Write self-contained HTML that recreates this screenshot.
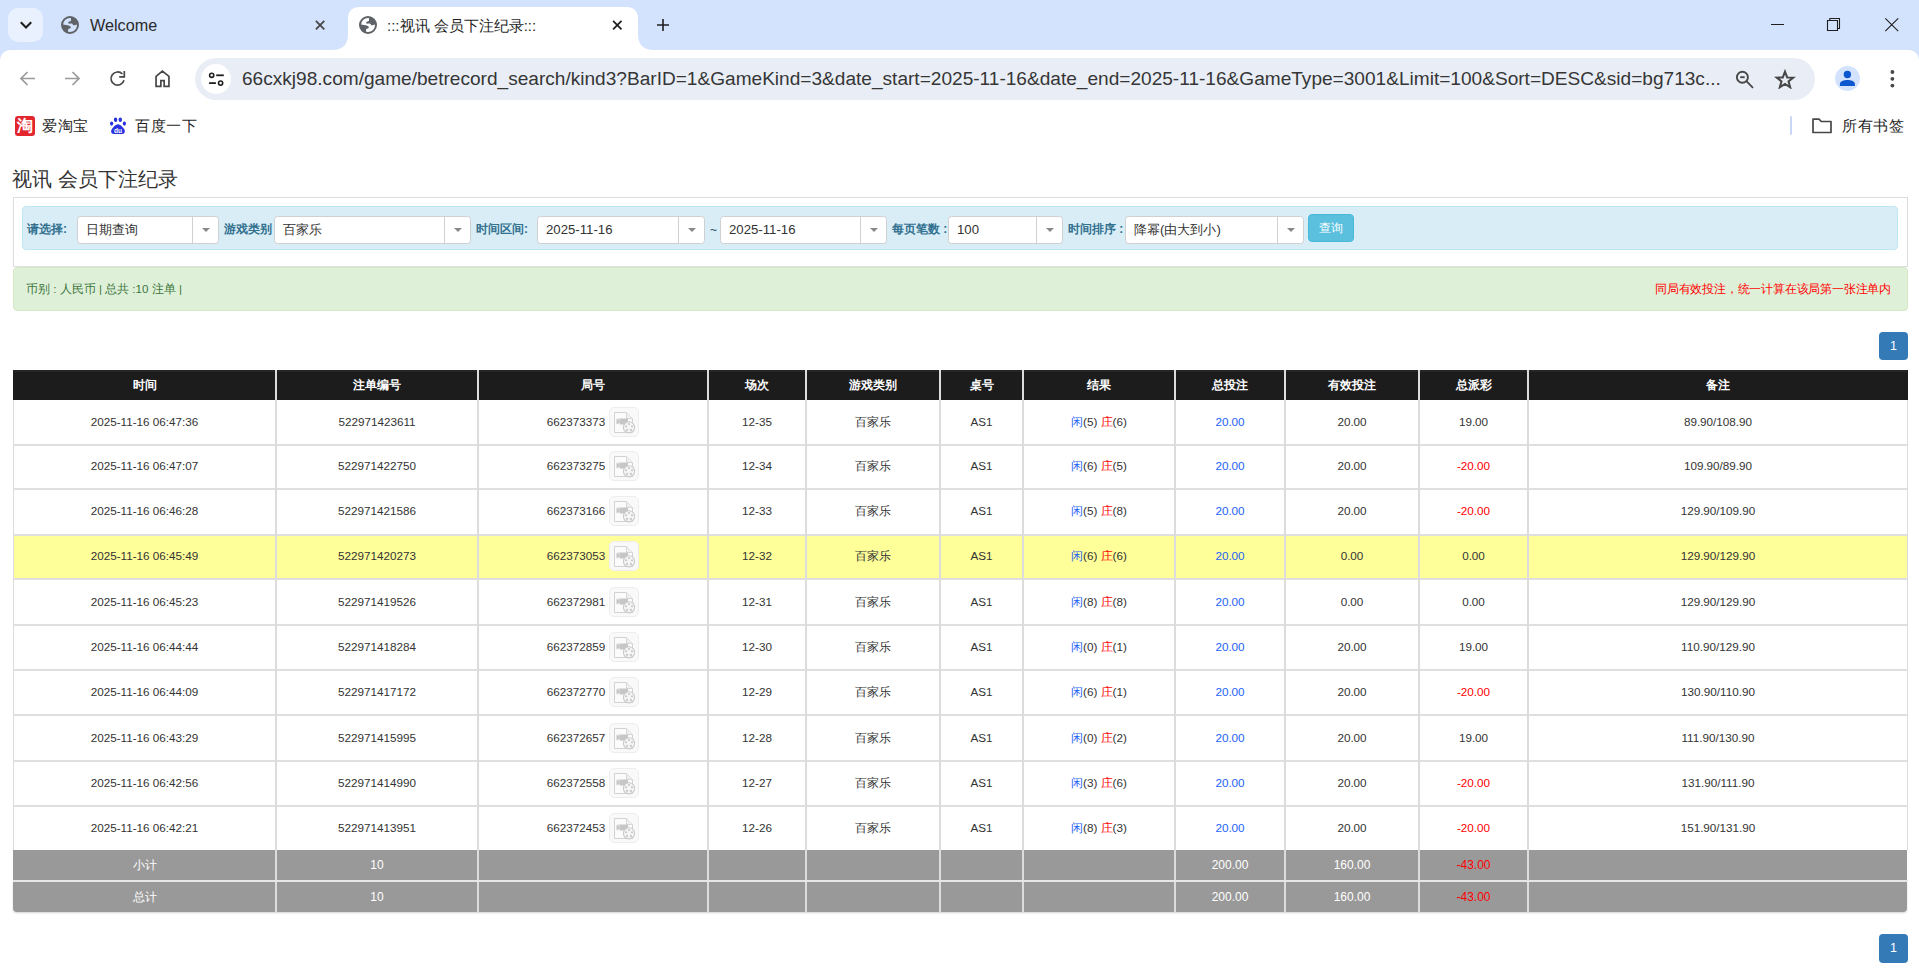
<!DOCTYPE html>
<html><head><meta charset="utf-8">
<style>
*{box-sizing:border-box;margin:0;padding:0}
html,body{width:1919px;height:970px;overflow:hidden;background:#fff;font-family:"Liberation Sans",sans-serif;}
.a{position:absolute}
#tabs{left:0;top:0;width:1919px;height:62px;background:#d3e3fd}
.ui{color:#1f1f1f}
.t{position:absolute;white-space:nowrap}
.sel{position:absolute;top:216px;height:28px;background:#fff;border:1px solid #d0d0d0;border-radius:3.5px}
.sel .dv{position:absolute;top:0;bottom:0;width:1px;background:#d0d0d0}
.sel .ar{position:absolute;top:11px;width:0;height:0;border-left:4px solid transparent;border-right:4px solid transparent;border-top:4px solid #888}
.sel .tx{position:absolute;left:8px;top:5px;font-size:13.2px;line-height:16px;color:#333;white-space:nowrap}
.lb{position:absolute;top:221px;font-size:12px;line-height:16px;font-weight:bold;color:#31708f;white-space:nowrap}
.th{position:absolute;top:370px;height:30px;line-height:30px;text-align:center;color:#fff;font-weight:bold;font-size:12px;white-space:nowrap}
.td{position:absolute;height:44px;line-height:44px;text-align:center;color:#333;font-size:11.7px;white-space:nowrap}
.tf{position:absolute;height:30px;line-height:30px;text-align:center;color:#fff;font-size:12px;white-space:nowrap}
.bl{color:#1d62f6}.rd{color:#f00}
.ic{position:absolute;top:7px;left:130px}
.ju{position:relative;left:-17px}
.hl{left:13px;width:1895px;height:2px;background:#dfdfdf}
</style></head><body>
<!-- TAB STRIP -->
<div id="tabs" class="a"></div>
<div class="a" style="left:8px;top:8px;width:35px;height:34px;border-radius:10px;background:#e9f1fe"></div>
<svg class="a" style="left:17px;top:17px" width="18" height="16" viewBox="0 0 18 16"><path d="M3.8 5.2 L9 10.4 L14.2 5.2" fill="none" stroke="#1f1f1f" stroke-width="2.1"/></svg>
<svg class="a" style="left:61px;top:16px" width="18" height="18" viewBox="0 0 18 18"><circle cx="9" cy="9" r="8" fill="none" stroke="#5f6368" stroke-width="2"/><path d="M10 1L10 4.5C10 5 9.5 5.2 8.5 5.5C7.3 5.8 7 6.5 7.3 7.2C7.6 7.8 8.5 7.6 9.8 7.6C11 7.6 11.5 8 12 8.8C12.5 9.5 13.5 9.5 14.5 9L17 8L17 6C16 3 13.5 1.2 10 1Z" fill="#5f6368"/><path d="M1 8.5L1.5 12C2.5 14.5 4.5 16.3 7 17L7 14C7 13.2 7.6 12.8 8.6 12.5C9.6 12.2 10 11.6 9.7 10.9C9.3 10 8.3 9.6 6.5 9.2C4.5 8.8 2.5 8.5 1 8.5Z" fill="#5f6368"/></svg>
<div class="a ui" style="left:90px;top:15px;font-size:16.2px;line-height:20px;color:#2a2a2a">Welcome</div>
<svg class="a" style="left:314px;top:19px" width="12" height="12" viewBox="0 0 12 12"><path d="M1.9 1.9L10.3 10.3M10.3 1.9L1.9 10.3" stroke="#474747" stroke-width="1.8"/></svg>
<svg class="a" style="left:332px;top:7px" width="322" height="43" viewBox="0 0 322 43"><path d="M0 43 Q16 43 16 27 V12 Q16 0 28 0 H294 Q306 0 306 12 V27 Q306 43 322 43 Z" fill="#fff"/></svg>
<svg class="a" style="left:359px;top:16px" width="18" height="18" viewBox="0 0 18 18"><circle cx="9" cy="9" r="8" fill="none" stroke="#5f6368" stroke-width="2"/><path d="M10 1L10 4.5C10 5 9.5 5.2 8.5 5.5C7.3 5.8 7 6.5 7.3 7.2C7.6 7.8 8.5 7.6 9.8 7.6C11 7.6 11.5 8 12 8.8C12.5 9.5 13.5 9.5 14.5 9L17 8L17 6C16 3 13.5 1.2 10 1Z" fill="#5f6368"/><path d="M1 8.5L1.5 12C2.5 14.5 4.5 16.3 7 17L7 14C7 13.2 7.6 12.8 8.6 12.5C9.6 12.2 10 11.6 9.7 10.9C9.3 10 8.3 9.6 6.5 9.2C4.5 8.8 2.5 8.5 1 8.5Z" fill="#5f6368"/></svg>
<div class="a ui" style="left:387px;top:16px;font-size:15px;line-height:20px;color:#1f1f1f">:::视讯 会员下注纪录:::</div>
<svg class="a" style="left:611px;top:19px" width="12" height="12" viewBox="0 0 12 12"><path d="M2.1 1.9L10.5 10.3M10.5 1.9L2.1 10.3" stroke="#1f1f1f" stroke-width="1.8"/></svg>
<svg class="a" style="left:656px;top:18px" width="14" height="14" viewBox="0 0 14 14"><path d="M7 1V13M1 7H13" stroke="#1f1f1f" stroke-width="1.6"/></svg>
<svg class="a" style="left:1770px;top:18px" width="16" height="14" viewBox="0 0 16 14"><path d="M1 6.5H14" stroke="#1f1f1f" stroke-width="1"/></svg>
<svg class="a" style="left:1826px;top:17px" width="16" height="16" viewBox="0 0 16 16"><path d="M1.5 3.5H11.5V13.5H1.5Z M3.8 3.5V1.5H13.5V11.5H11.5" fill="none" stroke="#1f1f1f" stroke-width="1.1"/></svg>
<svg class="a" style="left:1884px;top:17px" width="16" height="16" viewBox="0 0 16 16"><path d="M1.3 1.3L14.2 14.2M14.2 1.3L1.3 14.2" stroke="#1f1f1f" stroke-width="1.1"/></svg>
<!-- TOOLBAR -->
<div class="a" style="left:0;top:50px;width:1919px;height:96px;background:#fff;border-radius:10px 10px 0 0"></div>
<svg class="a" style="left:19px;top:70px" width="17" height="17" viewBox="0 0 17 17"><path d="M16 8.5H2.2M8.5 2 L2 8.5 L8.5 15" fill="none" stroke="#9a9a9a" stroke-width="1.7"/></svg>
<svg class="a" style="left:64px;top:70px" width="17" height="17" viewBox="0 0 17 17"><path d="M1 8.5H14.8M8.5 2 L15 8.5 L8.5 15" fill="none" stroke="#9a9a9a" stroke-width="1.7"/></svg>
<svg class="a" style="left:109px;top:70px" width="17" height="17" viewBox="0 0 17 17"><path d="M15 10.3A6.6 6.6 0 1 1 13.4 4" fill="none" stroke="#474747" stroke-width="1.7"/><path d="M15.3 1V6.8H10.2" fill="none" stroke="#474747" stroke-width="1.7" stroke-linejoin="miter"/></svg>
<svg class="a" style="left:153px;top:69px" width="18" height="19" viewBox="0 0 18 19"><path d="M3.05 17.45V7.4L9.4 2.2L15.95 7.4V17.45H11.15V11.65H7.85V17.45Z" fill="none" stroke="#474747" stroke-width="1.7" stroke-linejoin="miter"/></svg>
<div class="a" style="left:195px;top:58px;width:1620px;height:42px;border-radius:21px;background:#e9eef6"></div>
<div class="a" style="left:201px;top:64px;width:30px;height:30px;border-radius:15px;background:#fff"></div>
<svg class="a" style="left:208px;top:71px" width="17" height="17" viewBox="0 0 17 17"><circle cx="3.7" cy="4.3" r="2.1" fill="none" stroke="#1f1f1f" stroke-width="1.6"/><path d="M8.2 4.3H15.8" stroke="#1f1f1f" stroke-width="1.8"/><circle cx="12.6" cy="12.1" r="2.1" fill="none" stroke="#1f1f1f" stroke-width="1.6"/><path d="M1.1 12.1H7.9" stroke="#1f1f1f" stroke-width="1.8"/></svg>
<div class="a ui" id="url" style="left:242px;top:68px;font-size:19.08px;line-height:22px;color:#363636;white-space:nowrap">66cxkj98.com/game/betrecord_search/kind3?BarID=1&amp;GameKind=3&amp;date_start=2025-11-16&amp;date_end=2025-11-16&amp;GameType=3001&amp;Limit=100&amp;Sort=DESC&amp;sid=bg713c...</div>
<svg class="a" style="left:1735px;top:69px" width="20" height="20" viewBox="0 0 20 20"><circle cx="7.4" cy="8.2" r="5.5" fill="none" stroke="#474747" stroke-width="1.9"/><path d="M5.2 8.2H9.7" stroke="#474747" stroke-width="1.9"/><path d="M11.4 12.2L18 18.8" stroke="#474747" stroke-width="1.8"/></svg>
<svg class="a" style="left:1774px;top:69px" width="22" height="20" viewBox="0 0 22 20"><path d="M11 2.6L13.2 8.4L19.3 8.6L14.5 12.4L16.2 18.3L11 14.9L5.8 18.3L7.5 12.4L2.7 8.6L8.8 8.4Z" fill="none" stroke="#474747" stroke-width="2" stroke-linejoin="miter"/></svg>
<div class="a" style="left:1835px;top:66px;width:25px;height:25px;border-radius:13px;background:#d3e3fd"></div>
<svg class="a" style="left:1838px;top:69px" width="19" height="19" viewBox="0 0 19 19"><circle cx="9.4" cy="5.5" r="3.7" fill="#0b57d0"/><path d="M1.9 17V14.8C1.9 12.4 5.8 10.9 9.4 10.9S16.9 12.4 16.9 14.8V17Z" fill="#0b57d0"/></svg>
<svg class="a" style="left:1888px;top:69px" width="8" height="20" viewBox="0 0 8 20"><circle cx="4.4" cy="3" r="1.9" fill="#474747"/><circle cx="4.4" cy="9.8" r="1.9" fill="#474747"/><circle cx="4.4" cy="16.6" r="1.9" fill="#474747"/></svg>
<!-- BOOKMARKS -->
<div class="a" style="left:15px;top:116px;width:20px;height:20px;border-radius:3px;background:#e3262d"></div>
<div class="a" style="left:15px;top:116px;width:20px;height:20px;font-size:16px;line-height:20px;text-align:center;color:#fff;font-weight:bold">淘</div>
<div class="a ui" style="left:42px;top:116px;font-size:15px;letter-spacing:0.7px;line-height:20px;color:#1f1f1f">爱淘宝</div>
<svg class="a" style="left:109px;top:116px" width="18" height="19" viewBox="0 0 18 19"><ellipse cx="6.6" cy="3.8" rx="1.7" ry="2.3" fill="#2932e1"/><ellipse cx="11.3" cy="3.8" rx="1.7" ry="2.3" fill="#2932e1"/><ellipse cx="2.6" cy="7.6" rx="1.6" ry="2.1" fill="#2932e1"/><ellipse cx="15.4" cy="7.6" rx="1.6" ry="2.1" fill="#2932e1"/><path d="M9 8.3C6.6 8.3 4.6 11 3 13C1.4 14.8 2.2 18 4.6 18H13.4C15.8 18 16.6 14.8 15 13C13.4 11 11.4 8.3 9 8.3Z" fill="#2932e1"/><text x="9" y="16.6" font-size="6.6" font-family="Liberation Sans" font-weight="bold" fill="#fff" text-anchor="middle">du</text></svg>
<div class="a ui" style="left:135px;top:116px;font-size:15px;letter-spacing:0.7px;line-height:20px;color:#1f1f1f">百度一下</div>
<div class="a" style="left:1790px;top:116px;width:2px;height:19px;background:#c9d7f6;border-radius:1px"></div>
<svg class="a" style="left:1811px;top:117px" width="22" height="17" viewBox="0 0 22 17"><path d="M2 2.2H8.2L10.2 4.5H20V15.5H2Z" fill="none" stroke="#474747" stroke-width="1.7" stroke-linejoin="round"/></svg>
<div class="a ui" style="left:1842px;top:116px;font-size:15px;letter-spacing:0.7px;line-height:20px;color:#1f1f1f">所有书签</div>
<!-- PAGE -->
<div class="t" style="left:12px;top:166px;font-size:20px;line-height:26px;color:#333">视讯 会员下注纪录</div>
<div class="a" style="left:13px;top:197px;width:1895px;height:70px;border:1px solid #ddd;border-bottom:none"></div>
<div class="a" style="left:13px;top:266px;width:1895px;height:1px;background:#ddd"></div>
<div class="a" style="left:22px;top:206px;width:1876px;height:44px;background:#d9edf7;border:1px solid #bce8f1;border-radius:4px"></div>
<div class="lb" style="left:27px">请选择:</div>
<div class="sel" style="left:77px;width:142px"><div class="tx">日期查询</div><div class="dv" style="left:114px"></div><div class="ar" style="left:124px"></div></div>
<div class="lb" style="left:224px">游戏类别</div>
<div class="sel" style="left:274px;width:197px"><div class="tx">百家乐</div><div class="dv" style="left:169px"></div><div class="ar" style="left:179px"></div></div>
<div class="lb" style="left:476px">时间区间:</div>
<div class="sel" style="left:537px;width:168px"><div class="tx">2025-11-16</div><div class="dv" style="left:140px"></div><div class="ar" style="left:150px"></div></div>
<div class="t" style="left:710px;top:222px;font-size:12px;line-height:16px;color:#2a4a5e">~</div>
<div class="sel" style="left:720px;width:167px"><div class="tx">2025-11-16</div><div class="dv" style="left:139px"></div><div class="ar" style="left:149px"></div></div>
<div class="lb" style="left:892px">每页笔数 :</div>
<div class="sel" style="left:948px;width:115px"><div class="tx">100</div><div class="dv" style="left:87px"></div><div class="ar" style="left:97px"></div></div>
<div class="lb" style="left:1068px">时间排序 :</div>
<div class="sel" style="left:1125px;width:179px"><div class="tx">降幂(由大到小)</div><div class="dv" style="left:151px"></div><div class="ar" style="left:161px"></div></div>
<div class="a" style="left:1308px;top:214px;width:46px;height:28px;background:#5bc0de;border:1px solid #46b8da;border-radius:4px;color:#fff;font-size:12px;line-height:26px;text-align:center">查询</div>
<div class="a" style="left:13px;top:267px;width:1895px;height:44px;background:#dff0d8;border:1px solid #d6e9c6;border-radius:4px"></div>
<div class="t" style="left:26px;top:281px;font-size:11.6px;line-height:16px;color:#3c763d">币别 : 人民币 | 总共 :10 注单 |</div>
<div class="t" style="right:28px;top:281px;font-size:12px;letter-spacing:-0.2px;line-height:16px;color:#f00">同局有效投注，统一计算在该局第一张注单内</div>
<div class="a" style="left:1879px;top:332px;width:29px;height:28px;background:#337ab7;border-radius:4px;color:#fff;font-size:12.5px;line-height:28px;text-align:center">1</div>
<div class="a" style="left:1879px;top:934px;width:29px;height:29px;background:#337ab7;border-radius:4px;color:#fff;font-size:12.5px;line-height:29px;text-align:center">1</div>
<!-- TABLE -->
<div class="a" style="left:13px;top:370px;width:1895px;height:30px;background:#1c1c1c"></div>
<div class="a" style="left:14px;top:370px;width:1893px;height:2px;background:#262626"></div>
<div class="th" style="left:14px;width:261px">时间</div>
<div class="th" style="left:277px;width:200px">注单编号</div>
<div class="th" style="left:479px;width:228px">局号</div>
<div class="th" style="left:709px;width:96px">场次</div>
<div class="th" style="left:807px;width:132px">游戏类别</div>
<div class="th" style="left:941px;width:81px">桌号</div>
<div class="th" style="left:1024px;width:150px">结果</div>
<div class="th" style="left:1176px;width:108px">总投注</div>
<div class="th" style="left:1286px;width:132px">有效投注</div>
<div class="th" style="left:1420px;width:107px">总派彩</div>
<div class="th" style="left:1529px;width:378px">备注</div>
<div class="a" style="left:13px;top:400px;width:1895px;height:450px;background:#fff"></div>
<div class="a" style="left:14px;top:535px;width:1893px;height:44px;background:#ffff99"></div>
<div class="a hl" style="top:444px"></div>
<div class="a hl" style="top:488px"></div>
<div class="a hl" style="top:534px"></div>
<div class="a hl" style="top:578px"></div>
<div class="a hl" style="top:624px"></div>
<div class="a hl" style="top:669px"></div>
<div class="a hl" style="top:714px"></div>
<div class="a hl" style="top:760px"></div>
<div class="a hl" style="top:805px"></div>
<div class="td" style="left:14px;width:261px;top:400px">2025-11-16 06:47:36</div>
<div class="td" style="left:277px;width:200px;top:400px">522971423611</div>
<div class="td" style="left:479px;width:228px;top:400px"><span class="ju">662373373</span><svg class="ic" width="30" height="30" viewBox="0 0 30 30"><rect x="0.5" y="0.5" width="29" height="29" rx="4.5" fill="#f9f9f9" stroke="#ededed"/><path d="M5.5 5.5H17.5L23.5 11.5V25.5H5.5Z" fill="#fbfbfb" stroke="#d2d2d2" stroke-width="1"/><path d="M17.5 5.5V11.5H23.5" fill="#efefef" stroke="#d8d8d8"/><path d="M10.5 11.5H19V17.5H10.5Z" fill="#c6c6c6"/><path d="M7.5 11.8L10.5 13V16L7.5 17.2Z" fill="#c6c6c6"/><path d="M8.2 11.5H10.5V12.5" fill="#c6c6c6"/><circle cx="20" cy="20.3" r="5.6" fill="#f6f6f6" stroke="#cacaca" stroke-width="1.1"/><circle cx="20" cy="17.1" r="1.1" fill="#c8c8c8"/><circle cx="23" cy="19.3" r="1.1" fill="#c8c8c8"/><circle cx="21.9" cy="22.9" r="1.1" fill="#c8c8c8"/><circle cx="18.1" cy="22.9" r="1.1" fill="#c8c8c8"/><circle cx="17" cy="19.3" r="1.1" fill="#c8c8c8"/></svg></div>
<div class="td" style="left:709px;width:96px;top:400px">12-35</div>
<div class="td" style="left:807px;width:132px;top:400px">百家乐</div>
<div class="td" style="left:941px;width:81px;top:400px">AS1</div>
<div class="td" style="left:1024px;width:150px;top:400px"><span class="bl">闲</span>(5) <span class="rd">庄</span>(6)</div>
<div class="td" style="left:1176px;width:108px;top:400px"><span class="bl">20.00</span></div>
<div class="td" style="left:1286px;width:132px;top:400px">20.00</div>
<div class="td" style="left:1420px;width:107px;top:400px"><span>19.00</span></div>
<div class="td" style="left:1529px;width:378px;top:400px">89.90/108.90</div>
<div class="td" style="left:14px;width:261px;top:444px">2025-11-16 06:47:07</div>
<div class="td" style="left:277px;width:200px;top:444px">522971422750</div>
<div class="td" style="left:479px;width:228px;top:444px"><span class="ju">662373275</span><svg class="ic" width="30" height="30" viewBox="0 0 30 30"><rect x="0.5" y="0.5" width="29" height="29" rx="4.5" fill="#f9f9f9" stroke="#ededed"/><path d="M5.5 5.5H17.5L23.5 11.5V25.5H5.5Z" fill="#fbfbfb" stroke="#d2d2d2" stroke-width="1"/><path d="M17.5 5.5V11.5H23.5" fill="#efefef" stroke="#d8d8d8"/><path d="M10.5 11.5H19V17.5H10.5Z" fill="#c6c6c6"/><path d="M7.5 11.8L10.5 13V16L7.5 17.2Z" fill="#c6c6c6"/><path d="M8.2 11.5H10.5V12.5" fill="#c6c6c6"/><circle cx="20" cy="20.3" r="5.6" fill="#f6f6f6" stroke="#cacaca" stroke-width="1.1"/><circle cx="20" cy="17.1" r="1.1" fill="#c8c8c8"/><circle cx="23" cy="19.3" r="1.1" fill="#c8c8c8"/><circle cx="21.9" cy="22.9" r="1.1" fill="#c8c8c8"/><circle cx="18.1" cy="22.9" r="1.1" fill="#c8c8c8"/><circle cx="17" cy="19.3" r="1.1" fill="#c8c8c8"/></svg></div>
<div class="td" style="left:709px;width:96px;top:444px">12-34</div>
<div class="td" style="left:807px;width:132px;top:444px">百家乐</div>
<div class="td" style="left:941px;width:81px;top:444px">AS1</div>
<div class="td" style="left:1024px;width:150px;top:444px"><span class="bl">闲</span>(6) <span class="rd">庄</span>(5)</div>
<div class="td" style="left:1176px;width:108px;top:444px"><span class="bl">20.00</span></div>
<div class="td" style="left:1286px;width:132px;top:444px">20.00</div>
<div class="td" style="left:1420px;width:107px;top:444px"><span class="rd">-20.00</span></div>
<div class="td" style="left:1529px;width:378px;top:444px">109.90/89.90</div>
<div class="td" style="left:14px;width:261px;top:489px">2025-11-16 06:46:28</div>
<div class="td" style="left:277px;width:200px;top:489px">522971421586</div>
<div class="td" style="left:479px;width:228px;top:489px"><span class="ju">662373166</span><svg class="ic" width="30" height="30" viewBox="0 0 30 30"><rect x="0.5" y="0.5" width="29" height="29" rx="4.5" fill="#f9f9f9" stroke="#ededed"/><path d="M5.5 5.5H17.5L23.5 11.5V25.5H5.5Z" fill="#fbfbfb" stroke="#d2d2d2" stroke-width="1"/><path d="M17.5 5.5V11.5H23.5" fill="#efefef" stroke="#d8d8d8"/><path d="M10.5 11.5H19V17.5H10.5Z" fill="#c6c6c6"/><path d="M7.5 11.8L10.5 13V16L7.5 17.2Z" fill="#c6c6c6"/><path d="M8.2 11.5H10.5V12.5" fill="#c6c6c6"/><circle cx="20" cy="20.3" r="5.6" fill="#f6f6f6" stroke="#cacaca" stroke-width="1.1"/><circle cx="20" cy="17.1" r="1.1" fill="#c8c8c8"/><circle cx="23" cy="19.3" r="1.1" fill="#c8c8c8"/><circle cx="21.9" cy="22.9" r="1.1" fill="#c8c8c8"/><circle cx="18.1" cy="22.9" r="1.1" fill="#c8c8c8"/><circle cx="17" cy="19.3" r="1.1" fill="#c8c8c8"/></svg></div>
<div class="td" style="left:709px;width:96px;top:489px">12-33</div>
<div class="td" style="left:807px;width:132px;top:489px">百家乐</div>
<div class="td" style="left:941px;width:81px;top:489px">AS1</div>
<div class="td" style="left:1024px;width:150px;top:489px"><span class="bl">闲</span>(5) <span class="rd">庄</span>(8)</div>
<div class="td" style="left:1176px;width:108px;top:489px"><span class="bl">20.00</span></div>
<div class="td" style="left:1286px;width:132px;top:489px">20.00</div>
<div class="td" style="left:1420px;width:107px;top:489px"><span class="rd">-20.00</span></div>
<div class="td" style="left:1529px;width:378px;top:489px">129.90/109.90</div>
<div class="td" style="left:14px;width:261px;top:534px">2025-11-16 06:45:49</div>
<div class="td" style="left:277px;width:200px;top:534px">522971420273</div>
<div class="td" style="left:479px;width:228px;top:534px"><span class="ju">662373053</span><svg class="ic" width="30" height="30" viewBox="0 0 30 30"><rect x="0.5" y="0.5" width="29" height="29" rx="4.5" fill="#f9f9f9" stroke="#ededed"/><path d="M5.5 5.5H17.5L23.5 11.5V25.5H5.5Z" fill="#fbfbfb" stroke="#d2d2d2" stroke-width="1"/><path d="M17.5 5.5V11.5H23.5" fill="#efefef" stroke="#d8d8d8"/><path d="M10.5 11.5H19V17.5H10.5Z" fill="#c6c6c6"/><path d="M7.5 11.8L10.5 13V16L7.5 17.2Z" fill="#c6c6c6"/><path d="M8.2 11.5H10.5V12.5" fill="#c6c6c6"/><circle cx="20" cy="20.3" r="5.6" fill="#f6f6f6" stroke="#cacaca" stroke-width="1.1"/><circle cx="20" cy="17.1" r="1.1" fill="#c8c8c8"/><circle cx="23" cy="19.3" r="1.1" fill="#c8c8c8"/><circle cx="21.9" cy="22.9" r="1.1" fill="#c8c8c8"/><circle cx="18.1" cy="22.9" r="1.1" fill="#c8c8c8"/><circle cx="17" cy="19.3" r="1.1" fill="#c8c8c8"/></svg></div>
<div class="td" style="left:709px;width:96px;top:534px">12-32</div>
<div class="td" style="left:807px;width:132px;top:534px">百家乐</div>
<div class="td" style="left:941px;width:81px;top:534px">AS1</div>
<div class="td" style="left:1024px;width:150px;top:534px"><span class="bl">闲</span>(6) <span class="rd">庄</span>(6)</div>
<div class="td" style="left:1176px;width:108px;top:534px"><span class="bl">20.00</span></div>
<div class="td" style="left:1286px;width:132px;top:534px">0.00</div>
<div class="td" style="left:1420px;width:107px;top:534px"><span>0.00</span></div>
<div class="td" style="left:1529px;width:378px;top:534px">129.90/129.90</div>
<div class="td" style="left:14px;width:261px;top:580px">2025-11-16 06:45:23</div>
<div class="td" style="left:277px;width:200px;top:580px">522971419526</div>
<div class="td" style="left:479px;width:228px;top:580px"><span class="ju">662372981</span><svg class="ic" width="30" height="30" viewBox="0 0 30 30"><rect x="0.5" y="0.5" width="29" height="29" rx="4.5" fill="#f9f9f9" stroke="#ededed"/><path d="M5.5 5.5H17.5L23.5 11.5V25.5H5.5Z" fill="#fbfbfb" stroke="#d2d2d2" stroke-width="1"/><path d="M17.5 5.5V11.5H23.5" fill="#efefef" stroke="#d8d8d8"/><path d="M10.5 11.5H19V17.5H10.5Z" fill="#c6c6c6"/><path d="M7.5 11.8L10.5 13V16L7.5 17.2Z" fill="#c6c6c6"/><path d="M8.2 11.5H10.5V12.5" fill="#c6c6c6"/><circle cx="20" cy="20.3" r="5.6" fill="#f6f6f6" stroke="#cacaca" stroke-width="1.1"/><circle cx="20" cy="17.1" r="1.1" fill="#c8c8c8"/><circle cx="23" cy="19.3" r="1.1" fill="#c8c8c8"/><circle cx="21.9" cy="22.9" r="1.1" fill="#c8c8c8"/><circle cx="18.1" cy="22.9" r="1.1" fill="#c8c8c8"/><circle cx="17" cy="19.3" r="1.1" fill="#c8c8c8"/></svg></div>
<div class="td" style="left:709px;width:96px;top:580px">12-31</div>
<div class="td" style="left:807px;width:132px;top:580px">百家乐</div>
<div class="td" style="left:941px;width:81px;top:580px">AS1</div>
<div class="td" style="left:1024px;width:150px;top:580px"><span class="bl">闲</span>(8) <span class="rd">庄</span>(8)</div>
<div class="td" style="left:1176px;width:108px;top:580px"><span class="bl">20.00</span></div>
<div class="td" style="left:1286px;width:132px;top:580px">0.00</div>
<div class="td" style="left:1420px;width:107px;top:580px"><span>0.00</span></div>
<div class="td" style="left:1529px;width:378px;top:580px">129.90/129.90</div>
<div class="td" style="left:14px;width:261px;top:625px">2025-11-16 06:44:44</div>
<div class="td" style="left:277px;width:200px;top:625px">522971418284</div>
<div class="td" style="left:479px;width:228px;top:625px"><span class="ju">662372859</span><svg class="ic" width="30" height="30" viewBox="0 0 30 30"><rect x="0.5" y="0.5" width="29" height="29" rx="4.5" fill="#f9f9f9" stroke="#ededed"/><path d="M5.5 5.5H17.5L23.5 11.5V25.5H5.5Z" fill="#fbfbfb" stroke="#d2d2d2" stroke-width="1"/><path d="M17.5 5.5V11.5H23.5" fill="#efefef" stroke="#d8d8d8"/><path d="M10.5 11.5H19V17.5H10.5Z" fill="#c6c6c6"/><path d="M7.5 11.8L10.5 13V16L7.5 17.2Z" fill="#c6c6c6"/><path d="M8.2 11.5H10.5V12.5" fill="#c6c6c6"/><circle cx="20" cy="20.3" r="5.6" fill="#f6f6f6" stroke="#cacaca" stroke-width="1.1"/><circle cx="20" cy="17.1" r="1.1" fill="#c8c8c8"/><circle cx="23" cy="19.3" r="1.1" fill="#c8c8c8"/><circle cx="21.9" cy="22.9" r="1.1" fill="#c8c8c8"/><circle cx="18.1" cy="22.9" r="1.1" fill="#c8c8c8"/><circle cx="17" cy="19.3" r="1.1" fill="#c8c8c8"/></svg></div>
<div class="td" style="left:709px;width:96px;top:625px">12-30</div>
<div class="td" style="left:807px;width:132px;top:625px">百家乐</div>
<div class="td" style="left:941px;width:81px;top:625px">AS1</div>
<div class="td" style="left:1024px;width:150px;top:625px"><span class="bl">闲</span>(0) <span class="rd">庄</span>(1)</div>
<div class="td" style="left:1176px;width:108px;top:625px"><span class="bl">20.00</span></div>
<div class="td" style="left:1286px;width:132px;top:625px">20.00</div>
<div class="td" style="left:1420px;width:107px;top:625px"><span>19.00</span></div>
<div class="td" style="left:1529px;width:378px;top:625px">110.90/129.90</div>
<div class="td" style="left:14px;width:261px;top:670px">2025-11-16 06:44:09</div>
<div class="td" style="left:277px;width:200px;top:670px">522971417172</div>
<div class="td" style="left:479px;width:228px;top:670px"><span class="ju">662372770</span><svg class="ic" width="30" height="30" viewBox="0 0 30 30"><rect x="0.5" y="0.5" width="29" height="29" rx="4.5" fill="#f9f9f9" stroke="#ededed"/><path d="M5.5 5.5H17.5L23.5 11.5V25.5H5.5Z" fill="#fbfbfb" stroke="#d2d2d2" stroke-width="1"/><path d="M17.5 5.5V11.5H23.5" fill="#efefef" stroke="#d8d8d8"/><path d="M10.5 11.5H19V17.5H10.5Z" fill="#c6c6c6"/><path d="M7.5 11.8L10.5 13V16L7.5 17.2Z" fill="#c6c6c6"/><path d="M8.2 11.5H10.5V12.5" fill="#c6c6c6"/><circle cx="20" cy="20.3" r="5.6" fill="#f6f6f6" stroke="#cacaca" stroke-width="1.1"/><circle cx="20" cy="17.1" r="1.1" fill="#c8c8c8"/><circle cx="23" cy="19.3" r="1.1" fill="#c8c8c8"/><circle cx="21.9" cy="22.9" r="1.1" fill="#c8c8c8"/><circle cx="18.1" cy="22.9" r="1.1" fill="#c8c8c8"/><circle cx="17" cy="19.3" r="1.1" fill="#c8c8c8"/></svg></div>
<div class="td" style="left:709px;width:96px;top:670px">12-29</div>
<div class="td" style="left:807px;width:132px;top:670px">百家乐</div>
<div class="td" style="left:941px;width:81px;top:670px">AS1</div>
<div class="td" style="left:1024px;width:150px;top:670px"><span class="bl">闲</span>(6) <span class="rd">庄</span>(1)</div>
<div class="td" style="left:1176px;width:108px;top:670px"><span class="bl">20.00</span></div>
<div class="td" style="left:1286px;width:132px;top:670px">20.00</div>
<div class="td" style="left:1420px;width:107px;top:670px"><span class="rd">-20.00</span></div>
<div class="td" style="left:1529px;width:378px;top:670px">130.90/110.90</div>
<div class="td" style="left:14px;width:261px;top:716px">2025-11-16 06:43:29</div>
<div class="td" style="left:277px;width:200px;top:716px">522971415995</div>
<div class="td" style="left:479px;width:228px;top:716px"><span class="ju">662372657</span><svg class="ic" width="30" height="30" viewBox="0 0 30 30"><rect x="0.5" y="0.5" width="29" height="29" rx="4.5" fill="#f9f9f9" stroke="#ededed"/><path d="M5.5 5.5H17.5L23.5 11.5V25.5H5.5Z" fill="#fbfbfb" stroke="#d2d2d2" stroke-width="1"/><path d="M17.5 5.5V11.5H23.5" fill="#efefef" stroke="#d8d8d8"/><path d="M10.5 11.5H19V17.5H10.5Z" fill="#c6c6c6"/><path d="M7.5 11.8L10.5 13V16L7.5 17.2Z" fill="#c6c6c6"/><path d="M8.2 11.5H10.5V12.5" fill="#c6c6c6"/><circle cx="20" cy="20.3" r="5.6" fill="#f6f6f6" stroke="#cacaca" stroke-width="1.1"/><circle cx="20" cy="17.1" r="1.1" fill="#c8c8c8"/><circle cx="23" cy="19.3" r="1.1" fill="#c8c8c8"/><circle cx="21.9" cy="22.9" r="1.1" fill="#c8c8c8"/><circle cx="18.1" cy="22.9" r="1.1" fill="#c8c8c8"/><circle cx="17" cy="19.3" r="1.1" fill="#c8c8c8"/></svg></div>
<div class="td" style="left:709px;width:96px;top:716px">12-28</div>
<div class="td" style="left:807px;width:132px;top:716px">百家乐</div>
<div class="td" style="left:941px;width:81px;top:716px">AS1</div>
<div class="td" style="left:1024px;width:150px;top:716px"><span class="bl">闲</span>(0) <span class="rd">庄</span>(2)</div>
<div class="td" style="left:1176px;width:108px;top:716px"><span class="bl">20.00</span></div>
<div class="td" style="left:1286px;width:132px;top:716px">20.00</div>
<div class="td" style="left:1420px;width:107px;top:716px"><span>19.00</span></div>
<div class="td" style="left:1529px;width:378px;top:716px">111.90/130.90</div>
<div class="td" style="left:14px;width:261px;top:761px">2025-11-16 06:42:56</div>
<div class="td" style="left:277px;width:200px;top:761px">522971414990</div>
<div class="td" style="left:479px;width:228px;top:761px"><span class="ju">662372558</span><svg class="ic" width="30" height="30" viewBox="0 0 30 30"><rect x="0.5" y="0.5" width="29" height="29" rx="4.5" fill="#f9f9f9" stroke="#ededed"/><path d="M5.5 5.5H17.5L23.5 11.5V25.5H5.5Z" fill="#fbfbfb" stroke="#d2d2d2" stroke-width="1"/><path d="M17.5 5.5V11.5H23.5" fill="#efefef" stroke="#d8d8d8"/><path d="M10.5 11.5H19V17.5H10.5Z" fill="#c6c6c6"/><path d="M7.5 11.8L10.5 13V16L7.5 17.2Z" fill="#c6c6c6"/><path d="M8.2 11.5H10.5V12.5" fill="#c6c6c6"/><circle cx="20" cy="20.3" r="5.6" fill="#f6f6f6" stroke="#cacaca" stroke-width="1.1"/><circle cx="20" cy="17.1" r="1.1" fill="#c8c8c8"/><circle cx="23" cy="19.3" r="1.1" fill="#c8c8c8"/><circle cx="21.9" cy="22.9" r="1.1" fill="#c8c8c8"/><circle cx="18.1" cy="22.9" r="1.1" fill="#c8c8c8"/><circle cx="17" cy="19.3" r="1.1" fill="#c8c8c8"/></svg></div>
<div class="td" style="left:709px;width:96px;top:761px">12-27</div>
<div class="td" style="left:807px;width:132px;top:761px">百家乐</div>
<div class="td" style="left:941px;width:81px;top:761px">AS1</div>
<div class="td" style="left:1024px;width:150px;top:761px"><span class="bl">闲</span>(3) <span class="rd">庄</span>(6)</div>
<div class="td" style="left:1176px;width:108px;top:761px"><span class="bl">20.00</span></div>
<div class="td" style="left:1286px;width:132px;top:761px">20.00</div>
<div class="td" style="left:1420px;width:107px;top:761px"><span class="rd">-20.00</span></div>
<div class="td" style="left:1529px;width:378px;top:761px">131.90/111.90</div>
<div class="td" style="left:14px;width:261px;top:806px">2025-11-16 06:42:21</div>
<div class="td" style="left:277px;width:200px;top:806px">522971413951</div>
<div class="td" style="left:479px;width:228px;top:806px"><span class="ju">662372453</span><svg class="ic" width="30" height="30" viewBox="0 0 30 30"><rect x="0.5" y="0.5" width="29" height="29" rx="4.5" fill="#f9f9f9" stroke="#ededed"/><path d="M5.5 5.5H17.5L23.5 11.5V25.5H5.5Z" fill="#fbfbfb" stroke="#d2d2d2" stroke-width="1"/><path d="M17.5 5.5V11.5H23.5" fill="#efefef" stroke="#d8d8d8"/><path d="M10.5 11.5H19V17.5H10.5Z" fill="#c6c6c6"/><path d="M7.5 11.8L10.5 13V16L7.5 17.2Z" fill="#c6c6c6"/><path d="M8.2 11.5H10.5V12.5" fill="#c6c6c6"/><circle cx="20" cy="20.3" r="5.6" fill="#f6f6f6" stroke="#cacaca" stroke-width="1.1"/><circle cx="20" cy="17.1" r="1.1" fill="#c8c8c8"/><circle cx="23" cy="19.3" r="1.1" fill="#c8c8c8"/><circle cx="21.9" cy="22.9" r="1.1" fill="#c8c8c8"/><circle cx="18.1" cy="22.9" r="1.1" fill="#c8c8c8"/><circle cx="17" cy="19.3" r="1.1" fill="#c8c8c8"/></svg></div>
<div class="td" style="left:709px;width:96px;top:806px">12-26</div>
<div class="td" style="left:807px;width:132px;top:806px">百家乐</div>
<div class="td" style="left:941px;width:81px;top:806px">AS1</div>
<div class="td" style="left:1024px;width:150px;top:806px"><span class="bl">闲</span>(8) <span class="rd">庄</span>(3)</div>
<div class="td" style="left:1176px;width:108px;top:806px"><span class="bl">20.00</span></div>
<div class="td" style="left:1286px;width:132px;top:806px">20.00</div>
<div class="td" style="left:1420px;width:107px;top:806px"><span class="rd">-20.00</span></div>
<div class="td" style="left:1529px;width:378px;top:806px">151.90/131.90</div>
<div class="a" style="left:13px;top:850px;width:1894px;height:30px;background:#999"></div>
<div class="a" style="left:13px;top:882px;width:1894px;height:30px;background:#999;border-radius:0 0 4px 4px;box-shadow:0 1px 2px rgba(0,0,0,.18)"></div>
<div class="tf" style="left:14px;width:261px;top:850px">小计</div>
<div class="tf" style="left:277px;width:200px;top:850px">10</div>
<div class="tf" style="left:1176px;width:108px;top:850px">200.00</div>
<div class="tf" style="left:1286px;width:132px;top:850px">160.00</div>
<div class="tf" style="left:1420px;width:107px;top:850px"><span class="rd">-43.00</span></div>
<div class="tf" style="left:14px;width:261px;top:882px">总计</div>
<div class="tf" style="left:277px;width:200px;top:882px">10</div>
<div class="tf" style="left:1176px;width:108px;top:882px">200.00</div>
<div class="tf" style="left:1286px;width:132px;top:882px">160.00</div>
<div class="tf" style="left:1420px;width:107px;top:882px"><span class="rd">-43.00</span></div>
<div class="a" style="left:275px;top:370px;width:2px;height:542px;background:#dcdcdc"></div>
<div class="a" style="left:477px;top:370px;width:2px;height:542px;background:#dcdcdc"></div>
<div class="a" style="left:707px;top:370px;width:2px;height:542px;background:#dcdcdc"></div>
<div class="a" style="left:805px;top:370px;width:2px;height:542px;background:#dcdcdc"></div>
<div class="a" style="left:939px;top:370px;width:2px;height:542px;background:#dcdcdc"></div>
<div class="a" style="left:1022px;top:370px;width:2px;height:542px;background:#dcdcdc"></div>
<div class="a" style="left:1174px;top:370px;width:2px;height:542px;background:#dcdcdc"></div>
<div class="a" style="left:1284px;top:370px;width:2px;height:542px;background:#dcdcdc"></div>
<div class="a" style="left:1418px;top:370px;width:2px;height:542px;background:#dcdcdc"></div>
<div class="a" style="left:1527px;top:370px;width:2px;height:542px;background:#dcdcdc"></div>
<div class="a" style="left:13px;top:400px;width:1px;height:450px;background:#dcdcdc"></div>
<div class="a" style="left:1907px;top:400px;width:1px;height:450px;background:#dcdcdc"></div>
<div class="a" style="left:13px;top:880px;width:1895px;height:2px;background:#e6e6e6"></div>
</body></html>
